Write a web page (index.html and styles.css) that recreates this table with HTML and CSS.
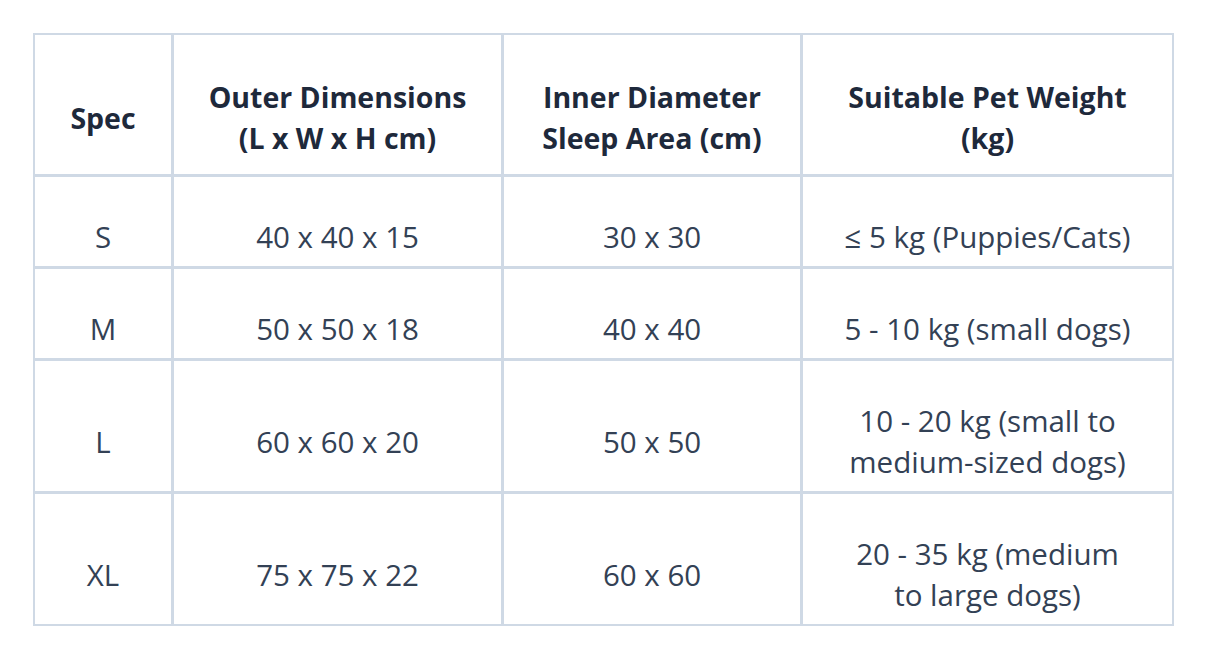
FILE: index.html
```html
<!DOCTYPE html>
<html lang="en">
<head>
<meta charset="utf-8">
<title>Pet Bed Sizes</title>
<link rel="stylesheet" href="styles.css">
</head>
<body>
<table class="spec-table">
  <thead>
    <tr>
      <th class="col-spec">Spec</th>
      <th class="col-outer">Outer Dimensions (L x W x H cm)</th>
      <th class="col-inner">Inner Diameter Sleep Area (cm)</th>
      <th class="col-weight">Suitable Pet Weight (kg)</th>
    </tr>
  </thead>
  <tbody>
    <tr>
      <td>S</td>
      <td>40 x 40 x 15</td>
      <td>30 x 30</td>
      <td>≤ 5 kg (Puppies/Cats)</td>
    </tr>
    <tr>
      <td>M</td>
      <td>50 x 50 x 18</td>
      <td>40 x 40</td>
      <td>5 - 10 kg (small dogs)</td>
    </tr>
    <tr>
      <td>L</td>
      <td>60 x 60 x 20</td>
      <td>50 x 50</td>
      <td>10 - 20 kg (small to<br>medium-sized dogs)</td>
    </tr>
    <tr>
      <td>XL</td>
      <td>75 x 75 x 22</td>
      <td>60 x 60</td>
      <td>20 - 35 kg (medium<br>to large dogs)</td>
    </tr>
  </tbody>
</table>
</body>
</html>
```
FILE: styles.css
```css
html, body {
  background: #ffffff;
}
body {
  margin: 33px;
  font-family: "Segoe UI", "Open Sans", "Noto Sans", sans-serif;
  color: #334155;
}
.spec-table {
  table-layout: fixed;
  width: 1141px;
  border-collapse: separate;
  border-spacing: 0;
  border: 2px solid #cfd9e5;
}
.spec-table th,
.spec-table td {
  box-sizing: border-box;
  text-align: center;
  vertical-align: middle;
  line-height: 41px;
  border-right: 3px solid #cfd9e5;
  border-bottom: 3px solid #cfd9e5;
}
.spec-table th:last-child,
.spec-table td:last-child {
  border-right: none;
}
.spec-table tbody tr:last-child td {
  border-bottom: none;
}
.spec-table th {
  font-size: 28.5px;
  font-weight: 700;
  color: #1e293b;
  padding: 42px 24px 15px;
}
.spec-table td {
  font-size: 29.5px;
  font-weight: 400;
  padding: 39px 20px 9px;
}
.col-spec { width: 139px; }
.col-outer { width: 330px; }
.col-inner { width: 299px; }
.col-weight { width: 369px; }
```
